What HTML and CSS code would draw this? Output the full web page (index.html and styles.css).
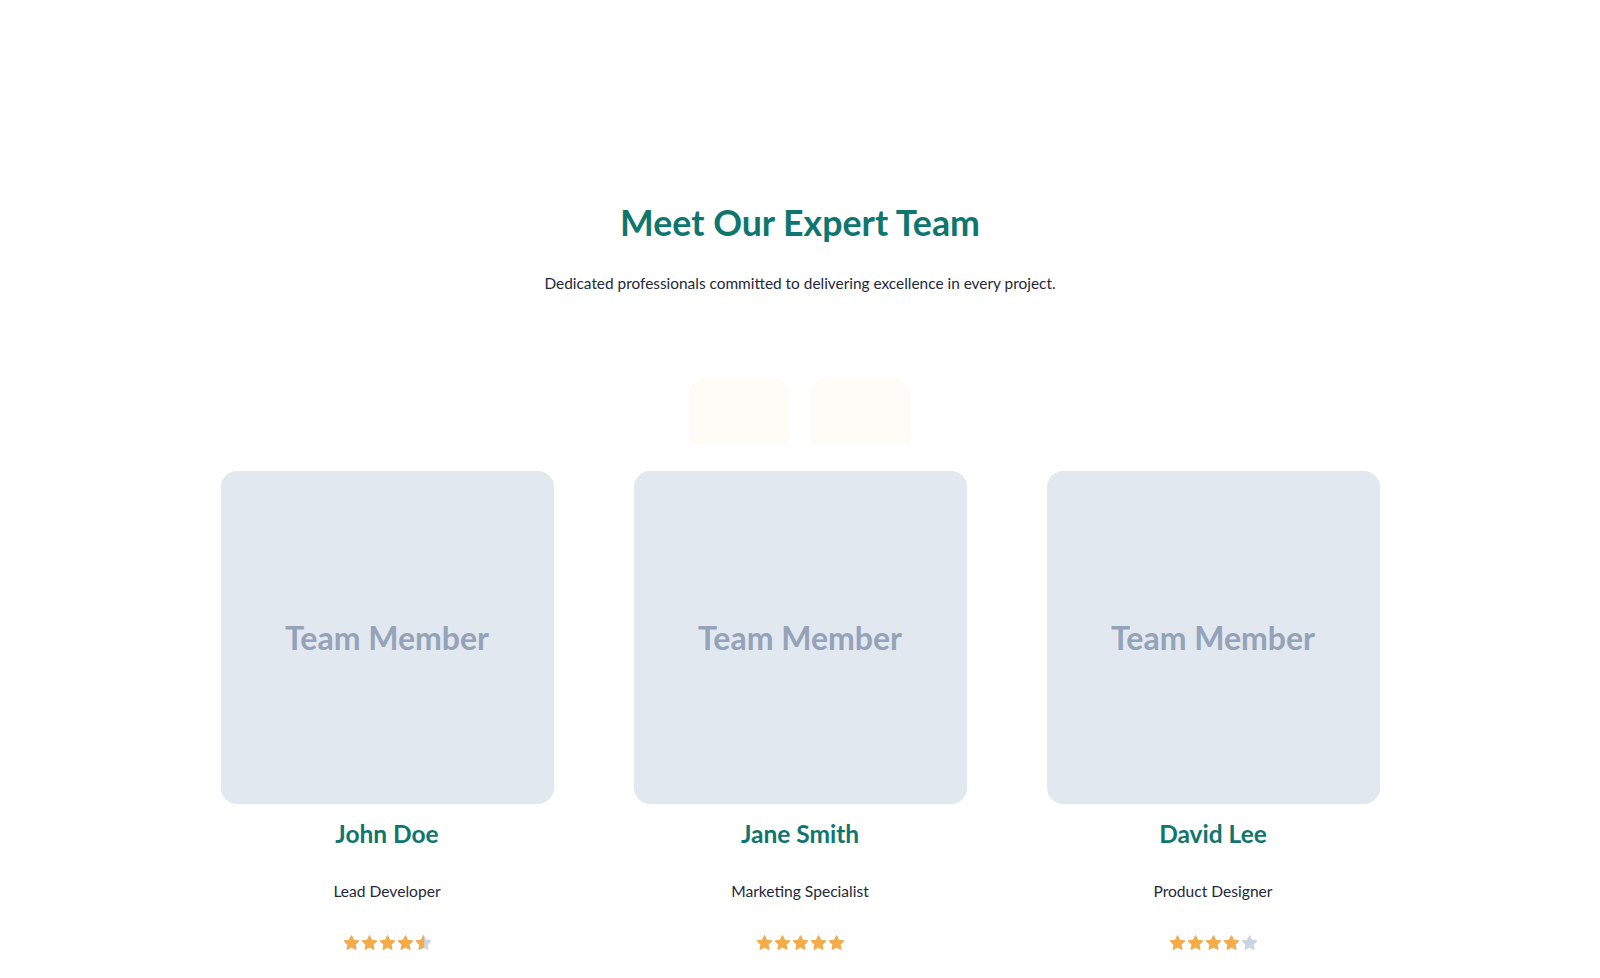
FILE: index.html
```html
<!DOCTYPE html>
<html lang="en">
<head>
<meta charset="utf-8">
<title>Meet Our Expert Team</title>
<link rel="stylesheet" href="styles.css">
</head>
<body>
<section class="team">
  <h2 class="team-title">Meet Our Expert Team</h2>
  <p class="team-subtitle">Dedicated professionals committed to delivering excellence in every project.</p>
  <div class="tabs">
    <div class="tab"></div>
    <div class="tab"></div>
  </div>
  <div class="grid">
    <article class="card">
      <div class="photo"><span>Team Member</span></div>
      <h3 class="name">John Doe</h3>
      <p class="role">Lead Developer</p>
      <div class="stars">
        <svg class="star" viewBox="1 1.5 22 21"><path class="on" d="M12 2.8l2.8 5.9 6.4.7-4.8 4.4 1.3 6.4L12 17l-5.7 3.2 1.3-6.4-4.8-4.4 6.4-.7z"/></svg>
        <svg class="star" viewBox="1 1.5 22 21"><path class="on" d="M12 2.8l2.8 5.9 6.4.7-4.8 4.4 1.3 6.4L12 17l-5.7 3.2 1.3-6.4-4.8-4.4 6.4-.7z"/></svg>
        <svg class="star" viewBox="1 1.5 22 21"><path class="on" d="M12 2.8l2.8 5.9 6.4.7-4.8 4.4 1.3 6.4L12 17l-5.7 3.2 1.3-6.4-4.8-4.4 6.4-.7z"/></svg>
        <svg class="star" viewBox="1 1.5 22 21"><path class="on" d="M12 2.8l2.8 5.9 6.4.7-4.8 4.4 1.3 6.4L12 17l-5.7 3.2 1.3-6.4-4.8-4.4 6.4-.7z"/></svg>
        <svg class="star" viewBox="1 1.5 22 21"><path class="off" d="M12 2.8l2.8 5.9 6.4.7-4.8 4.4 1.3 6.4L12 17l-5.7 3.2 1.3-6.4-4.8-4.4 6.4-.7z"/><path class="on" d="M12 2.8V17l-5.7 3.2 1.3-6.4-4.8-4.4 6.4-.7z"/></svg>
      </div>
    </article>
    <article class="card">
      <div class="photo"><span>Team Member</span></div>
      <h3 class="name">Jane Smith</h3>
      <p class="role">Marketing Specialist</p>
      <div class="stars">
        <svg class="star" viewBox="1 1.5 22 21"><path class="on" d="M12 2.8l2.8 5.9 6.4.7-4.8 4.4 1.3 6.4L12 17l-5.7 3.2 1.3-6.4-4.8-4.4 6.4-.7z"/></svg>
        <svg class="star" viewBox="1 1.5 22 21"><path class="on" d="M12 2.8l2.8 5.9 6.4.7-4.8 4.4 1.3 6.4L12 17l-5.7 3.2 1.3-6.4-4.8-4.4 6.4-.7z"/></svg>
        <svg class="star" viewBox="1 1.5 22 21"><path class="on" d="M12 2.8l2.8 5.9 6.4.7-4.8 4.4 1.3 6.4L12 17l-5.7 3.2 1.3-6.4-4.8-4.4 6.4-.7z"/></svg>
        <svg class="star" viewBox="1 1.5 22 21"><path class="on" d="M12 2.8l2.8 5.9 6.4.7-4.8 4.4 1.3 6.4L12 17l-5.7 3.2 1.3-6.4-4.8-4.4 6.4-.7z"/></svg>
        <svg class="star" viewBox="1 1.5 22 21"><path class="on" d="M12 2.8l2.8 5.9 6.4.7-4.8 4.4 1.3 6.4L12 17l-5.7 3.2 1.3-6.4-4.8-4.4 6.4-.7z"/></svg>
      </div>
    </article>
    <article class="card">
      <div class="photo"><span>Team Member</span></div>
      <h3 class="name">David Lee</h3>
      <p class="role">Product Designer</p>
      <div class="stars">
        <svg class="star" viewBox="1 1.5 22 21"><path class="on" d="M12 2.8l2.8 5.9 6.4.7-4.8 4.4 1.3 6.4L12 17l-5.7 3.2 1.3-6.4-4.8-4.4 6.4-.7z"/></svg>
        <svg class="star" viewBox="1 1.5 22 21"><path class="on" d="M12 2.8l2.8 5.9 6.4.7-4.8 4.4 1.3 6.4L12 17l-5.7 3.2 1.3-6.4-4.8-4.4 6.4-.7z"/></svg>
        <svg class="star" viewBox="1 1.5 22 21"><path class="on" d="M12 2.8l2.8 5.9 6.4.7-4.8 4.4 1.3 6.4L12 17l-5.7 3.2 1.3-6.4-4.8-4.4 6.4-.7z"/></svg>
        <svg class="star" viewBox="1 1.5 22 21"><path class="on" d="M12 2.8l2.8 5.9 6.4.7-4.8 4.4 1.3 6.4L12 17l-5.7 3.2 1.3-6.4-4.8-4.4 6.4-.7z"/></svg>
        <svg class="star" viewBox="1 1.5 22 21"><path class="off" d="M12 2.8l2.8 5.9 6.4.7-4.8 4.4 1.3 6.4L12 17l-5.7 3.2 1.3-6.4-4.8-4.4 6.4-.7z"/></svg>
      </div>
    </article>
  </div>
</section>
</body>
</html>
```
FILE: styles.css
```css
* { box-sizing: border-box; }
html, body { margin: 0; padding: 0; background: #ffffff; }
body {
  font-family: "Lato", "Noto Sans", sans-serif;
  color: #1e293b;
}
.team {
  padding-top: 201px;
  display: flex;
  flex-direction: column;
  align-items: center;
}
.team-title {
  margin: 0;
  font-size: 35.7px;
  line-height: 44px;
  font-weight: 700;
  color: #0f766e;
}
.team-subtitle {
  margin: 26px 0 0;
  font-size: 15.4px;
  line-height: 24px;
  color: #1e293b;
}
.tabs {
  margin-top: 83px;
  display: flex;
  gap: 22px;
}
.tab {
  width: 100px;
  height: 66px;
  border-radius: 16px 16px 0 0;
  background: #fdfcf6;
}
.grid {
  margin-top: 27px;
  display: grid;
  grid-template-columns: repeat(3, 333px);
  column-gap: 80px;
}
.card {
  display: flex;
  flex-direction: column;
  align-items: center;
}
.photo {
  width: 333px;
  height: 333px;
  border-radius: 16px;
  background: #e2e8f0;
  display: flex;
  align-items: center;
  justify-content: center;
}
.photo span {
  font-family: "Lato", sans-serif;
  font-weight: 700;
  font-size: 32px;
  color: #94a3b8;
}
.name {
  margin: 15px 0 0;
  font-size: 24.5px;
  line-height: 30px;
  font-weight: 700;
  color: #0f766e;
}
.role {
  margin: 31px 0 0;
  font-size: 15.6px;
  line-height: 22px;
  color: #1e293b;
}
.stars {
  margin-top: 33px;
  display: flex;
  gap: 1px;
}
.star {
  width: 17px;
  height: 16px;
  display: block;
}
.star .on { fill: #f4ab48; stroke: #f4ab48; stroke-width: 1.8; stroke-linejoin: round; }
.star .off { fill: #cbd5e1; stroke: #cbd5e1; stroke-width: 1.8; stroke-linejoin: round; }
```
